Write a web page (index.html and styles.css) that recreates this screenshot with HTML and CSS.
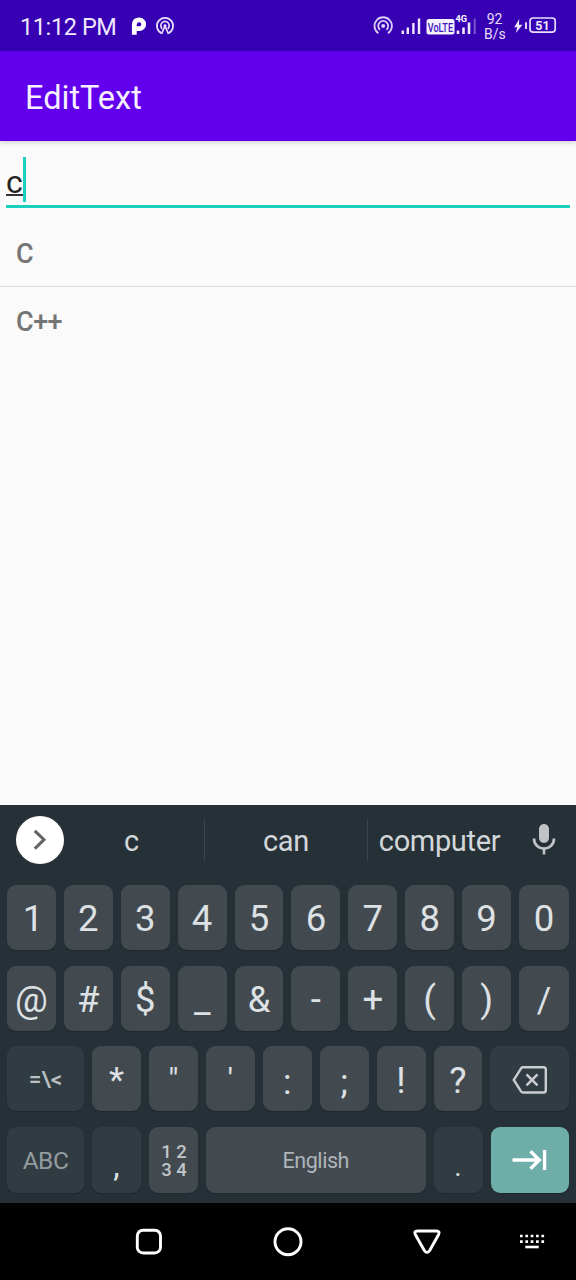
FILE: index.html
```html
<!DOCTYPE html>
<html lang="en">
<head>
<meta charset="utf-8">
<title>EditText</title>
<link rel="stylesheet" href="styles.css">
</head>
<body>
<div class="screen">
  <header class="status">
    <span class="clock">11:12 PM</span>
    <svg class="status-left" width="46" height="24" viewBox="130 14 46 24">
      <path d="M134.3 34.8V25.2Q134.3 19.8 139.3 19.8A4.1 4.1 0 0 1 139.3 28.6H136.6" fill="none" stroke="#fff" stroke-width="4.8"/>
      <g fill="none" stroke="#e4dcfa" stroke-width="1.7"><path d="M161.5 33.2A8.1 8.1 0 1 1 168.5 33.2"/><path d="M162.2 28.8A4.2 4.2 0 1 1 167.8 28.8"/><path d="M161.5 34L165 26L168.5 34"/></g>
      <circle cx="165" cy="25.8" r="1.6" fill="#e4dcfa"/>
    </svg>
    <svg class="status-right" width="204" height="40" viewBox="372 6 204 40">
      <g fill="none" stroke="#d9cff6" stroke-width="1.8"><path d="M378.4 33.2A8.7 8.7 0 1 1 388 33.2"/><path d="M380 29.8A5 5 0 1 1 386.4 29.8"/></g>
      <circle cx="383.2" cy="26" r="2" fill="#d9cff6"/>
      <path d="M402.8 34V30.5M407.8 34V27.5M413.4 34V23M419 34V18.5" stroke="#eee9fc" stroke-width="2.4"/>
      <rect x="426.5" y="19" width="28" height="15.5" rx="2.5" fill="#f4f0fe"/>
      <text x="427.8" y="31.9" class="volte" textLength="25.2" lengthAdjust="spacingAndGlyphs">VoLTE</text>
      <text x="455.5" y="21.8" class="net" textLength="11.5" lengthAdjust="spacingAndGlyphs">4G</text>
      <path d="M458 34V30.5M463.5 34V27.5M469 34V22.5" stroke="#eee9fc" stroke-width="2.6"/>
      <path d="M474.7 34V18.5" stroke="#7957cd" stroke-width="2"/>
      <text x="494.5" y="24" class="rate" text-anchor="middle">92</text>
      <text x="494.8" y="39" class="rate" text-anchor="middle">B/s</text>
      <path d="M519.3 19L514.2 27.3H517.2L515.8 33L522.5 24.8H518.9Z" fill="#eee9fc"/>
      <path d="M526 22.3V29" stroke="#eee9fc" stroke-width="1.8"/>
      <rect x="530" y="18" width="25.2" height="14.2" rx="3.2" fill="none" stroke="#e6defb" stroke-width="1.7"/>
      <text x="542.4" y="29.7" class="charge" text-anchor="middle">51</text>
    </svg>
  </header>
  <div class="appbar">EditText</div>
  <main class="content">
    <div class="field"><span class="typed">c</span><i class="caret"></i></div>
    <ul class="options"><li>C</li><li>C++</li></ul>
  </main>
  <section class="keyboard">
    <div class="suggest">
      <span class="expand"><svg width="48" height="48" viewBox="0 0 48 48"><path d="M18.8 14.8L28 23.7L18.8 32.6" fill="none" stroke="#636363" stroke-width="3"/></svg></span>
      <span class="word first">c</span>
      <span class="word second">can</span>
      <span class="word third">computer</span>
      <svg class="mic" width="24" height="34" viewBox="0 0 24 34"><rect x="7" y="1" width="10" height="19" rx="5" fill="#bfc3c6"/><path d="M2 15.5C2 29 22 29 22 15.5M12 25.5V31.5" fill="none" stroke="#bfc3c6" stroke-width="2.7"/></svg>
    </div>
    <div class="row ten">
      <b class="key one">1</b><b class="key">2</b><b class="key">3</b><b class="key">4</b><b class="key">5</b><b class="key">6</b><b class="key">7</b><b class="key">8</b><b class="key">9</b><b class="key">0</b>
    </div>
    <div class="row ten">
      <b class="key">@</b><b class="key">#</b><b class="key">$</b><b class="key">_</b><b class="key">&amp;</b><b class="key">-</b><b class="key">+</b><b class="key paren">(</b><b class="key paren">)</b><b class="key slash">/</b>
    </div>
    <div class="row">
      <b class="key dim wide more">=\&lt;</b><b class="key star">*</b><b class="key quote">"</b><b class="key quote">'</b><b class="key colon">:</b><b class="key colon">;</b><b class="key">!</b><b class="key">?</b>
      <b class="key dim wider"><svg width="36" height="28" viewBox="0 0 36 28"><path d="M11 1.3H31.5Q33.8 1.3 33.8 3.6V24.2Q33.8 26.5 31.5 26.5H11Q9.8 26.5 9.2 25.6L1.8 13.9L9.2 2.2Q9.8 1.3 11 1.3Z" fill="none" stroke="#cbced1" stroke-width="2.4"/><path d="M14.5 8.4L25.5 19.4M25.5 8.4L14.5 19.4" stroke="#cbced1" stroke-width="2.5"/></svg></b>
    </div>
    <div class="row last">
      <b class="key dim wide abc">ABC</b><b class="key dim mark">,</b>
      <b class="key nums"><span>1 2</span><span>3 4</span></b>
      <b class="key space">English</b><b class="key dim mark dot">.</b>
      <b class="key wider enter"><svg width="36" height="22" viewBox="0 0 36 22"><path d="M.5 11H27M18.5 2.2L27.3 11L18.5 19.8M32.6 1V21" fill="none" stroke="#fff" stroke-width="3.4"/></svg></b>
    </div>
  </section>
  <nav class="nav">
    <svg width="576" height="77" viewBox="0 1203 576 77" fill="none" stroke="#fff" stroke-width="2.9">
      <rect x="137.3" y="1230.2" width="23.2" height="22.8" rx="5.8"/>
      <circle cx="288" cy="1241.7" r="13"/>
      <path d="M417.5 1231H436.3Q440.3 1231 438.6 1234.5L429.7 1250.5Q427 1254.3 424.3 1250.5L415.3 1234.5Q413.6 1231 417.5 1231Z"/>
      <path d="M520 1236H545M520 1241.6H545" stroke-width="2.7" stroke-dasharray="2.7 2.65"/>
      <path d="M525.3 1247H538.7" stroke-width="2.6"/>
    </svg>
  </nav>
</div>
</body>
</html>
```
FILE: styles.css
```css
* { box-sizing: border-box; }
body { margin: 0; font-family: Roboto, "Liberation Sans", sans-serif; }
svg { display: block; flex: none; }
.screen { width: 576px; height: 1280px; display: flex; flex-direction: column; background: #fafafa; overflow: hidden; }

.status { height: 51px; flex: none; display: flex; align-items: center; padding-left: 20px; background: #3700b3; color: #eee9fc; }
.clock { width: 110px; font-size: 23.5px; letter-spacing: -.4px; line-height: 28px; white-space: nowrap; padding-top: 2px; }
.status-right { margin-left: auto; }
.volte { font: 500 13px Roboto, sans-serif; fill: #3f12bb; }
.net { font: 700 9.5px Roboto, sans-serif; fill: #fff; }
.rate { font: 400 14px Roboto, sans-serif; fill: #e6defb; }
.charge { font: 700 12.5px Roboto, sans-serif; fill: #eee9fc; }

.appbar { height: 90px; flex: none; padding: 1px 0 0 25px; background: #6200ee; color: #f5effe; font-size: 32.5px; line-height: 92px; box-shadow: 0 1px 5px rgba(0, 0, 0, .2); }

.content { flex: 1; }
.field { display: flex; height: 67px; margin: 0 6px; padding-top: 16px; border-bottom: 3px solid #1bd0bf; }
.typed { height: 39px; font-size: 32px; line-height: 50px; color: #222; width: 16.5px; border-bottom: 2px solid #333; }
.caret { width: 3px; height: 45px; background: #1bd0bf; }
.options { list-style: none; margin: 11px 0 0; padding: 0; }
.options li { height: 67px; padding-left: 16px; font-size: 27px; letter-spacing: -.5px; font-weight: 500; line-height: 71px; color: #757575; }
.options li + li { border-top: 1px solid #dadada; }

.keyboard { height: 398px; flex: none; background: #263137; color: #dde1e4; }
.suggest { height: 80px; display: flex; align-items: center; padding: 0 20px 10px 16px; font-size: 29px; letter-spacing: -.35px; }
.expand { width: 48px; height: 48px; border-radius: 50%; background: #fff; }
.word { height: 40px; line-height: 43px; text-align: center; color: #d3d7da; }
.first { width: 141px; padding-right: 5px; border-right: 1px solid #3b454b; }
.second { width: 163px; border-right: 1px solid #3b454b; }
.third { width: 143px; }
.mic { margin-left: auto; }

.row { height: 65px; display: flex; gap: 8px; margin: 0 7px 15.7px; }
.row.last { height: 66px; margin-bottom: 0; }
.key { flex: 1 1 0; min-width: 0; display: flex; align-items: center; justify-content: center; padding-top: 4px; border-radius: 9px; background: #424a50; box-shadow: 0 1px 1px #1f282d; font-size: 36.5px; font-weight: 400; line-height: 1; }
.ten .key:last-child { flex: 0 0 50px; }
.dim { background: #313c42; }
.wide { flex: 0 0 77px; }
.wider { flex: 0 0 78.5px; padding-top: 2px; }
.one { text-indent: 3px; }
.paren { font-size: 37px; padding-top: 2px; }
.slash { font-size: 35px; }
.star { font-size: 35px; padding-top: 4px; }
.quote { font-size: 32px; padding-top: 0; }
.colon { font-size: 35px; padding-top: 7px; }
.more { font-size: 22.5px; font-weight: 500; color: #b9bfc3; padding-top: 0; }
.abc { font-size: 24.5px; letter-spacing: -.5px; color: #949b9f; padding-top: 2px; }
.mark { flex: 0 0 49px; font-size: 32px; padding-top: 9px; }
.dot { font-size: 28px; padding-top: 14px; }
.nums { flex: 0 0 49px; flex-direction: column; padding-top: 2px; text-indent: 1px; font-size: 18.5px; font-weight: 500; line-height: 18px; color: #c0c5c8; }
.nums span { height: 18px; white-space: nowrap; }
.space { font-size: 21.5px; letter-spacing: -.45px; color: #aeb4b9; padding-top: 2px; }
.enter { background: #6fada8; padding: 0 0 0 1px; }

.nav { height: 77px; flex: none; background: #000; }
```
